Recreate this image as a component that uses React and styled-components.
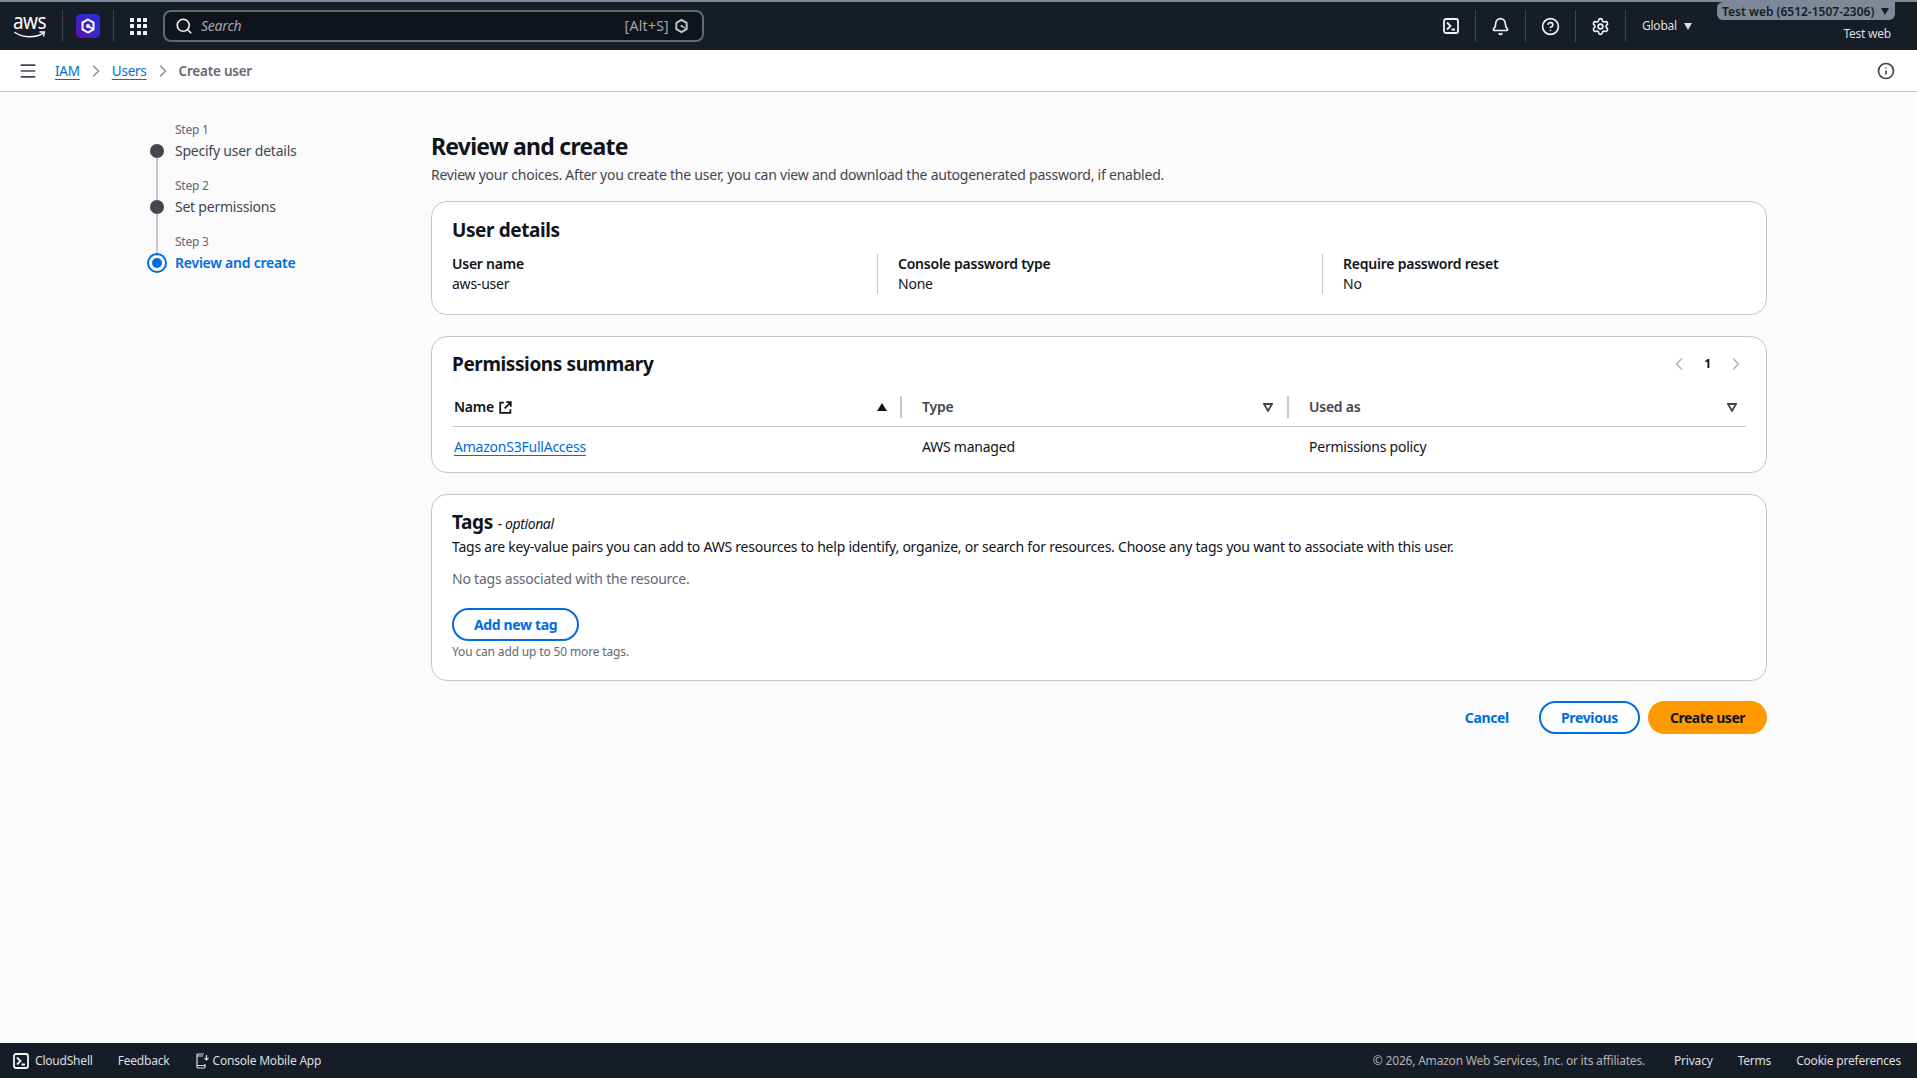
import React from 'react'
import styled, { createGlobalStyle } from 'styled-components'
import { Bell, ChevronLeft, ChevronRight, CircleHelp, Info, Menu, Search, Settings } from 'lucide-react'

const GlobalStyle = createGlobalStyle`
  html, body {
    margin: 0;
    height: 100%;
    background: #fbfbfc;
    font-family: "Noto Sans", "Open Sans", sans-serif;
    font-size: 14px;
    line-height: 20px;
    letter-spacing: -0.23px;
    color: #0f141a;
  }

  #root {
    height: 100%;
  }

  * {
    box-sizing: border-box;
  }
`

const Page = styled.div`
  height: 1078px;
  display: flex;
  flex-direction: column;
  overflow: hidden;
`

const TopBar = styled.header`
  flex: 0 0 50px;
  display: flex;
  align-items: center;
  background: #161d26;
  border-top: 2px solid #7d8998;
  color: #fff;
`

const LogoBox = styled.div`
  width: 62px;
  height: 32px;
  flex: none;
  display: flex;
  flex-direction: column;
  align-items: center;
  padding-right: 3px;
`

const LogoText = styled.span`
  font-size: 19px;
  line-height: 19px;
  letter-spacing: -0.6px;
  margin-top: 2px;
  transform: scaleY(1.1);
`

const NavSep = styled.span`
  width: 1px;
  height: 32px;
  flex: none;
  background: #424650;
`

const AppTile = styled.div`
  margin: 0 13px;
  display: flex;
`

const GridWrap = styled.div`
  margin-left: 16px;
  margin-right: 16px;
  display: grid;
  grid-template-columns: repeat(3, 4px);
  gap: 2.5px;
`

const GridDot = styled.span`
  width: 4px;
  height: 4px;
  background: #f3f3f7;
  border-radius: 0.5px;
`

const SearchBox = styled.div`
  width: 541px;
  height: 32px;
  flex: none;
  display: flex;
  align-items: center;
  background: #0f141a;
  border: 2px solid #656871;
  border-radius: 8px;
  padding: 0 13px 0 10px;
  color: #f3f3f7;
`

const SearchHint = styled.span`
  flex: 1;
  margin-left: 8px;
  font-size: 14px;
  font-style: italic;
  color: #a4a4ad;
`

const Shortcut = styled.span`
  font-size: 14px;
  letter-spacing: 0.27px;
  color: #a4a4ad;
  margin-right: 5px;
`

const NavRight = styled.div`
  margin-left: auto;
  display: flex;
  align-items: center;
  height: 100%;
`

const NavIcon = styled.div`
  width: 49px;
  height: 32px;
  display: flex;
  align-items: center;
  justify-content: center;
  color: #f3f3f7;
`

const Region = styled.div`
  display: flex;
  align-items: center;
  gap: 7px;
  margin-left: 16px;
  width: 75px;
  font-size: 12px;
  color: #dedee3;
`

const Caret = styled.span`
  width: 0;
  height: 0;
  flex: none;
  border-left: 4.5px solid transparent;
  border-right: 4.5px solid transparent;
  border-top: 7px solid ${p => p.$color || '#dedee3'};
`

const Account = styled.div`
  width: 178px;
  margin-right: 22px;
  height: 100%;
  display: flex;
  flex-direction: column;
  align-items: flex-end;
  font-size: 12px;
`

const AccountTag = styled.div`
  width: 100%;
  height: 18px;
  display: flex;
  align-items: center;
  justify-content: space-between;
  padding: 1px 6px 0 5px;
  background: #7d8998;
  color: #161d26;
  font-weight: 600;
  letter-spacing: 0;
  line-height: 18px;
  border-radius: 6px 0 6px 6px;
  white-space: nowrap;
`

const AccountName = styled.div`
  margin-top: 5px;
  margin-right: 4px;
  color: #dedee3;
  line-height: 18px;
`

const BreadcrumbBar = styled.nav`
  flex: 0 0 42px;
  display: flex;
  align-items: center;
  background: #fff;
  border-bottom: 1px solid #c6c6cd;
  padding: 0 22px 0 18px;
  font-size: 13.5px;
  color: #424650;
`

const CrumbLink = styled.a`
  color: #006ce0;
  text-decoration: underline;
  text-underline-offset: 3px;
`

const CrumbCurrent = styled.span`
  color: #656871;
  font-weight: 600;
`

const ChevronBox = styled.span`
  display: flex;
  color: #8c8c94;
  margin: 0 6px;
`

const MenuBox = styled.span`
  display: flex;
  margin-right: 17px;
`

const InfoBox = styled.span`
  display: flex;
  margin-left: auto;
  color: #424650;
`

const Body = styled.div`
  flex: 1;
  display: flex;
  min-height: 0;
`

const Side = styled.aside`
  width: 431px;
  flex: none;
  padding: 29px 0 0 146px;
`

const Step = styled.div`
  display: grid;
  grid-template-columns: 21px 1fr;
  grid-template-rows: 36px 20px;
  column-gap: 8px;
  margin-top: ${p => (p.$first ? '-16px' : 0)};
`

const Connector = styled.span`
  justify-self: center;
  width: 2px;
  margin: -3px 0;
  background: ${p => (p.$hidden ? 'transparent' : '#c6c6cd')};
`

const StepLabel = styled.div`
  align-self: end;
  margin-bottom: 3px;
  font-size: 12px;
  line-height: 16px;
  color: #656871;
`

const Marker = styled.span`
  justify-self: center;
  align-self: center;
  width: 14px;
  height: 14px;
  border-radius: 50%;
  background: #424650;
`

const ActiveMarker = styled.span`
  justify-self: center;
  align-self: center;
  width: 20px;
  height: 20px;
  border-radius: 50%;
  border: 2px solid #006ce0;
  display: flex;
  align-items: center;
  justify-content: center;

  &::after {
    content: '';
    width: 10px;
    height: 10px;
    border-radius: 50%;
    background: #006ce0;
  }
`

const StepTitle = styled.div`
  color: ${p => (p.$active ? '#006ce0' : '#424650')};
  font-weight: ${p => (p.$active ? 600 : 400)};
`

const Main = styled.main`
  width: 1336px;
  flex: none;
  padding-top: 39px;
`

const PageTitle = styled.h1`
  margin: 0;
  font-size: 23px;
  line-height: 30px;
  font-weight: 700;
  letter-spacing: -0.75px;
`

const PageDesc = styled.p`
  margin: 4px 0 16px;
  color: #424650;
`

const Card = styled.section`
  background: #fff;
  border: 1px solid #c6c6cd;
  border-radius: 16px;
  padding: ${p => p.$top}px 20px 0;
  height: ${p => p.$height}px;
  margin-bottom: ${p => p.$gap}px;
`

const CardHead = styled.div`
  display: flex;
  align-items: center;
  justify-content: space-between;
`

const CardTitle = styled.h2`
  margin: 0;
  font-size: 19px;
  line-height: 24px;
  font-weight: 700;
  letter-spacing: -0.4px;

  em {
    font-size: 14px;
    font-weight: 400;
    margin-left: 5px;
  }
`

const DetailGrid = styled.div`
  margin-top: 12px;
  display: grid;
  grid-template-columns: 425px 445px 1fr;
`

const DetailCell = styled.div`
  padding-left: ${p => (p.$first ? 0 : 20)}px;
  border-left: ${p => (p.$first ? 'none' : '1px solid #c6c6cd')};
`

const DetailLabel = styled.div`
  font-weight: 600;
`

const Pager = styled.div`
  display: flex;
  align-items: center;
  gap: 10px;
  color: #b4b4bb;
  font-size: 12px;
`

const PageNum = styled.span`
  color: #0f141a;
  font-weight: 700;
  width: 17px;
  text-align: center;
`

const TableHead = styled.div`
  margin-top: 15px;
  height: 36px;
  display: grid;
  grid-template-columns: 448px 387px 1fr;
  border-bottom: 1px solid #c6c6cd;
`

const HeadCell = styled.div`
  display: flex;
  align-items: center;
  height: 32px;
  padding: 0 ${p => p.$right}px 0 ${p => (p.$first ? 2 : 0)}px;
  font-weight: 600;
  color: ${p => (p.$first ? '#0f141a' : '#424650')};
`

const HeadDivider = styled.span`
  width: 2px;
  height: 22px;
  margin-right: 20px;
  background: #c6c6cd;
`

const HeadName = styled.span`
  flex: 1;
  display: flex;
  align-items: center;
  gap: 5px;
`

const SortUp = styled.span`
  width: 0;
  height: 0;
  margin-right: 13px;
  border-left: 5px solid transparent;
  border-right: 5px solid transparent;
  border-bottom: 8px solid #0f141a;
`

const TableRow = styled.div`
  display: grid;
  grid-template-columns: 448px 387px 1fr;
  margin-top: 10px;
`

const RowCell = styled.div`
  padding-left: ${p => (p.$first ? 2 : 22)}px;
  color: #0f141a;
`

const TextLine = styled.p`
  margin: ${p => p.$top || 0}px 0 0;
  color: ${p => p.$color || '#0f141a'};
`

const OutlineButton = styled.button`
  height: 33px;
  padding: 0 20px;
  border: 2px solid #006ce0;
  border-radius: 20px;
  background: #fff;
  color: #006ce0;
  font: 700 14px/20px "Noto Sans", sans-serif;
  letter-spacing: -0.35px;
`

const Hint = styled.div`
  margin-top: 3px;
  font-size: 12px;
  line-height: 16px;
  letter-spacing: -0.15px;
  color: #656871;
`

const Actions = styled.div`
  display: flex;
  justify-content: flex-end;
  align-items: center;
  gap: 8px;
`

const TextButton = styled.button`
  height: 33px;
  border: 0;
  background: none;
  padding: 0 22px;
  color: #006ce0;
  font: 700 14px/20px "Noto Sans", sans-serif;
  letter-spacing: -0.35px;
`

const PrimaryButton = styled.button`
  height: 33px;
  padding: 0 22px;
  border: 0;
  border-radius: 20px;
  background: #ff9900;
  color: #0f141a;
  font: 700 14px/20px "Noto Sans", sans-serif;
  letter-spacing: -0.5px;
`

const Footer = styled.footer`
  flex: 0 0 35px;
  display: flex;
  align-items: center;
  background: #161d26;
  padding: 0 16px 0 13px;
  font-size: 12px;
  letter-spacing: -0.2px;
  color: #dedee3;
`

const FootItem = styled.span`
  display: flex;
  align-items: center;
  gap: ${p => p.$gap || 0}px;
  margin-right: ${p => p.$right || 0}px;
  white-space: nowrap;
`

const FootRight = styled.div`
  margin-left: auto;
  display: flex;
  align-items: center;
  gap: 25px;
`

const Copyright = styled.span`
  color: #b4b4bb;
  margin-right: 4px;
`

const FilterGap = styled.span`
  width: 14px;
`

const TerminalIcon = ({ size = 16, color = '#f3f3f7' }) => (
  <svg width={size} height={size} viewBox="0 0 16 16" fill="none" stroke={color} strokeWidth="1.8">
    <rect x="1" y="1" width="14" height="14" rx="2" />
    <path d="M4 4.5 7.5 8 4 11.5M8.5 11.5H12" />
  </svg>
)

const AppLogo = () => (
  <svg width="24" height="24" viewBox="0 0 24 24" fill="none">
    <defs>
      <linearGradient id="tile" x1="0" y1="1" x2="1" y2="0">
        <stop offset="0" stopColor="#5a12b8" />
        <stop offset="1" stopColor="#1c36d8" />
      </linearGradient>
    </defs>
    <rect width="24" height="24" rx="5" fill="url(#tile)" />
    <path d="M12 5.5 17.5 8.7v6.6L12 18.5l-5.5-3.2V8.7z" stroke="#fff" strokeWidth="2" />
    <circle cx="12" cy="12" r="2" fill="#fff" />
    <path d="M12 12l5 3" stroke="#fff" strokeWidth="1.6" />
  </svg>
)

const QMark = () => (
  <svg width="15" height="16" viewBox="0 0 16 16" fill="none" stroke="#c6c6cd" strokeWidth="2">
    <path d="M8 1.5 13.5 4.7v6.6L8 14.5l-5.5-3.2V4.7z" />
    <circle cx="8" cy="8" r="1.2" fill="#c6c6cd" stroke="none" />
    <path d="M8 8l4 2.3" strokeWidth="1.4" />
  </svg>
)

const ExternalIcon = () => (
  <svg width="13" height="13" viewBox="0 0 16 16" fill="none" stroke="#0f141a" strokeWidth="2.2">
    <path d="M6 2H1.5v12.5H14V10M9 1.5h5.5V7M14 2 7 9" />
  </svg>
)

const FilterCaret = () => (
  <svg width="10" height="9" viewBox="0 0 10 9" fill="none" stroke="#424650" strokeWidth="1.8">
    <path d="M1 1h8L5 8z" />
  </svg>
)

const PhoneIcon = () => (
  <svg width="13" height="16" viewBox="0 0 13 16" fill="none" stroke="#dedee3" strokeWidth="1.2">
    <path d="M8 1H2a1 1 0 0 0-1 1v12a1 1 0 0 0 1 1h6a1 1 0 0 0 1-1v-3M1 3h6M1 12.5h8M10.5 2v5M8.5 5l2 2 2-2" />
  </svg>
)

const AwsSmile = () => (
  <svg width="32" height="8" viewBox="0 0 32 8" fill="none">
    <path d="M1 1.5c8 5.5 20 5.5 28 .8" stroke="#fff" strokeWidth="1.5" strokeLinecap="round" />
    <path d="M25.5 1H30.5L29.5 5.5" stroke="#fff" strokeWidth="1.3" />
  </svg>
)

const steps = [
  { label: 'Step 1', title: 'Specify user details' },
  { label: 'Step 2', title: 'Set permissions' },
  { label: 'Step 3', title: 'Review and create', active: true }
]

const navIcons = [
  <TerminalIcon key="term" />,
  <Bell key="bell" size={19} strokeWidth={2.1} />,
  <CircleHelp key="help" size={19} strokeWidth={2.1} />,
  <Settings key="gear" size={19} strokeWidth={2.1} />
]

const App = () => (
  <Page>
    <GlobalStyle />
    <TopBar>
      <LogoBox>
        <LogoText>aws</LogoText>
        <AwsSmile />
      </LogoBox>
      <NavSep />
      <AppTile><AppLogo /></AppTile>
      <NavSep />
      <GridWrap>
        {Array.from({ length: 9 }).map((_, i) => <GridDot key={i} />)}
      </GridWrap>
      <SearchBox>
        <Search size={18} strokeWidth={2.2} />
        <SearchHint>Search</SearchHint>
        <Shortcut>[Alt+S]</Shortcut>
        <QMark />
      </SearchBox>
      <NavRight>
        {navIcons.map((icon, i) => (
          <React.Fragment key={i}>
            <NavIcon>{icon}</NavIcon>
            <NavSep />
          </React.Fragment>
        ))}
        <Region>Global <Caret /></Region>
        <Account>
          <AccountTag>Test web (6512-1507-2306) <Caret $color="#161d26" /></AccountTag>
          <AccountName>Test web</AccountName>
        </Account>
      </NavRight>
    </TopBar>

    <BreadcrumbBar>
      <MenuBox><Menu size={20} /></MenuBox>
      <CrumbLink>IAM</CrumbLink>
      <ChevronBox><ChevronRight size={20} strokeWidth={1.7} /></ChevronBox>
      <CrumbLink>Users</CrumbLink>
      <ChevronBox><ChevronRight size={20} strokeWidth={1.7} /></ChevronBox>
      <CrumbCurrent>Create user</CrumbCurrent>
      <InfoBox><Info size={18} strokeWidth={2.2} /></InfoBox>
    </BreadcrumbBar>

    <Body>
      <Side>
        {steps.map((s, i) => (
          <Step key={s.label} $first={i === 0}>
            <Connector $hidden={i === 0} />
            <StepLabel>{s.label}</StepLabel>
            {s.active ? <ActiveMarker /> : <Marker />}
            <StepTitle $active={s.active}>{s.title}</StepTitle>
          </Step>
        ))}
      </Side>

      <Main>
        <PageTitle>Review and create</PageTitle>
        <PageDesc>Review your choices. After you create the user, you can view and download the autogenerated password, if enabled.</PageDesc>

        <Card $top={16} $height={114} $gap={21}>
          <CardTitle>User details</CardTitle>
          <DetailGrid>
            <DetailCell $first>
              <DetailLabel>User name</DetailLabel>
              aws-user
            </DetailCell>
            <DetailCell>
              <DetailLabel>Console password type</DetailLabel>
              None
            </DetailCell>
            <DetailCell>
              <DetailLabel>Require password reset</DetailLabel>
              No
            </DetailCell>
          </DetailGrid>
        </Card>

        <Card $top={15} $height={137} $gap={21}>
          <CardHead>
            <CardTitle>Permissions summary</CardTitle>
            <Pager>
              <ChevronLeft size={20} />
              <PageNum>1</PageNum>
              <ChevronRight size={20} />
            </Pager>
          </CardHead>
          <TableHead>
            <HeadCell $first $right={0}>
              <HeadName>Name <ExternalIcon /></HeadName>
              <SortUp />
            </HeadCell>
            <HeadCell $right={0}>
              <HeadDivider />
              <HeadName>Type</HeadName>
              <FilterCaret />
              <FilterGap />
            </HeadCell>
            <HeadCell $right={9}>
              <HeadDivider />
              <HeadName>Used as</HeadName>
              <FilterCaret />
            </HeadCell>
          </TableHead>
          <TableRow>
            <RowCell $first><CrumbLink>AmazonS3FullAccess</CrumbLink></RowCell>
            <RowCell>AWS managed</RowCell>
            <RowCell>Permissions policy</RowCell>
          </TableRow>
        </Card>

        <Card $top={15} $height={187} $gap={20}>
          <CardTitle>Tags<em>- optional</em></CardTitle>
          <TextLine $top={1}>Tags are key-value pairs you can add to AWS resources to help identify, organize, or search for resources. Choose any tags you want to associate with this user.</TextLine>
          <TextLine $top={12} $color="#656871">No tags associated with the resource.</TextLine>
          <TextLine as="div" $top={19}><OutlineButton>Add new tag</OutlineButton></TextLine>
          <Hint>You can add up to 50 more tags.</Hint>
        </Card>

        <Actions>
          <TextButton>Cancel</TextButton>
          <OutlineButton>Previous</OutlineButton>
          <PrimaryButton>Create user</PrimaryButton>
        </Actions>
      </Main>
    </Body>

    <Footer>
      <FootItem $gap={6} $right={25}><TerminalIcon size={16} />CloudShell</FootItem>
      <FootItem $right={26}>Feedback</FootItem>
      <FootItem $gap={4}><PhoneIcon />Console Mobile App</FootItem>
      <FootRight>
        <Copyright>© 2026, Amazon Web Services, Inc. or its affiliates.</Copyright>
        <span>Privacy</span>
        <span>Terms</span>
        <span>Cookie preferences</span>
      </FootRight>
    </Footer>
  </Page>
)

export default App
